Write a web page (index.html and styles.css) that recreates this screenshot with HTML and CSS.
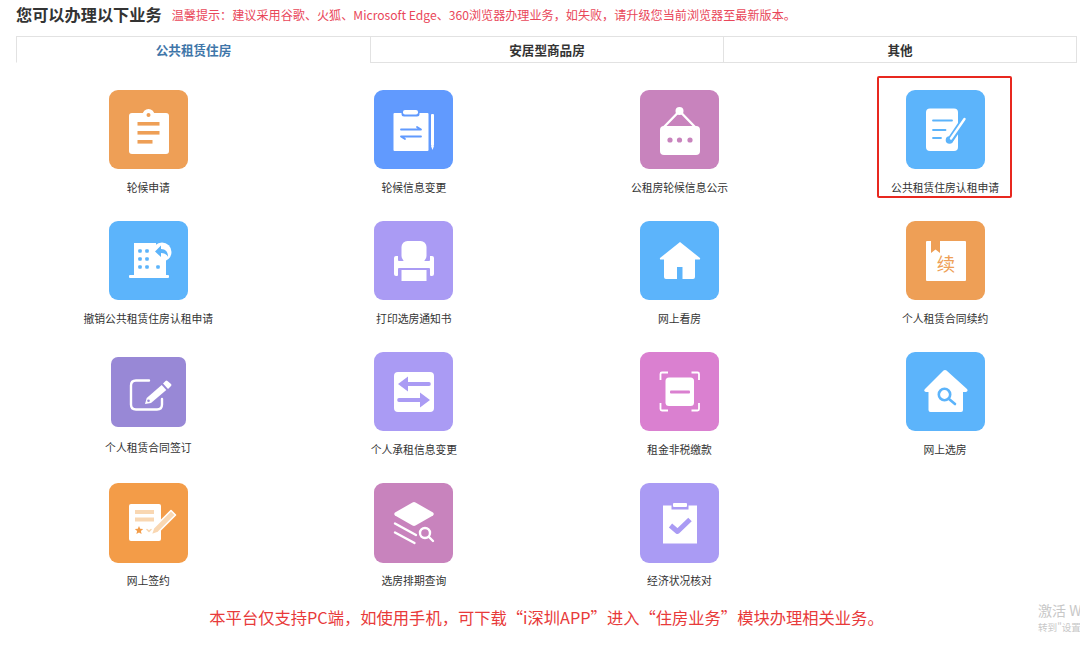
FILE: index.html
```html
<!DOCTYPE html>
<html lang="zh-CN">
  <head>
    <meta charset="UTF-8" />
    <meta name="viewport" content="width=device-width, initial-scale=1.0" />
    <title>您可以办理以下业务</title>
    <link rel="stylesheet" href="styles.css">
  </head>
  <body>
    <div class="head-row">
      <h1 class="page-title">您可以办理以下业务</h1>
      <span class="tip">温馨提示：建议采用谷歌、火狐、Microsoft Edge、360浏览器办理业务，如失败，请升级您当前浏览器至最新版本。</span>
    </div>

    <div class="tabs">
      <div class="tab active">公共租赁住房</div>
      <div class="tab">安居型商品房</div>
      <div class="tab">其他</div>
    </div>

    <div class="grid">
      <!-- row 1 -->
      <div class="tile">
        <div class="icon orange">
          <svg viewBox="0 0 79 79">
            <circle cx="39.5" cy="25" r="6" />
            <rect x="20" y="23" width="40" height="41" rx="3" />
            <circle class="cut" cx="39.5" cy="25" r="2" />
            <rect class="cut" x="28.5" y="32" width="22" height="3.6" />
            <rect class="cut" x="28.5" y="41" width="22" height="3.6" />
            <rect class="cut" x="28.5" y="50" width="15" height="3.6" />
          </svg>
        </div>
        <div class="label">轮候申请</div>
      </div>
      <div class="tile">
        <div class="icon blue">
          <svg viewBox="0 0 79 79">
            <rect x="19.5" y="23" width="35" height="38" rx="1" />
            <rect class="cut" x="27.5" y="19" width="18" height="7.5" rx="2.5" />
            <rect x="29" y="20" width="15" height="4.5" rx="2" />
            <rect x="57" y="24" width="3" height="32" rx="1" />
            <path d="M57 56h3l-1.5 4z" />
            <path class="cut-line" d="M27 39.5h20l-4-2.6M47 46.5H27l4 2.6" />
          </svg>
        </div>
        <div class="label">轮候信息变更</div>
      </div>
      <div class="tile">
        <div class="icon plum">
          <svg viewBox="0 0 79 79">
            <circle cx="39.5" cy="21" r="4" />
            <path class="line" d="M39.5 21 23 38M39.5 21 56 38" />
            <rect x="20" y="36" width="40" height="29" rx="4" />
            <path class="cut" d="M39.5 27.500 30.500 36h18z" />
            <circle class="cut" cx="30" cy="50" r="2.6" />
            <circle class="cut" cx="39.5" cy="50" r="2.6" />
            <circle class="cut" cx="50" cy="50" r="2.6" />
          </svg>
        </div>
        <div class="label">公租房轮候信息公示</div>
      </div>
      <div class="tile marked">
        <div class="icon sky">
          <svg viewBox="0 0 79 79">
            <rect x="20" y="18.500" width="32" height="42.500" rx="4" />
            <path class="cut-line" d="M27 30.500h19M27 40h12.500M27 48h8" />
            <path class="cut-line halo-line" d="M58.500 29 45 49" />
            <circle class="cut" cx="43.500" cy="50" r="3.800" />
            <path class="line" d="M58.500 29 45 48.500" />
          </svg>
        </div>
        <div class="label">公共租赁住房认租申请</div>
      </div>

      <!-- row 2 -->
      <div class="tile">
        <div class="icon sky">
          <svg viewBox="0 0 79 79">
            <path d="M25 22h22v32H25z" />
            <rect x="47" y="38" width="10" height="17" />
            <rect x="20" y="54" width="40" height="3" rx="1" />
            <circle cx="53" cy="31" r="9.500" />
            <path class="cut" d="M46 30.500l6-6v3.600c5 .2 7 3.200 7 7.600-1.600-2.400-3.600-3.600-7-3.600v4z" />
            <rect class="cut" x="29.200" y="28.200" width="3.600" height="3.600" rx="1" />
            <rect class="cut" x="36.200" y="28.200" width="3.600" height="3.600" rx="1" />
            <rect class="cut" x="29.200" y="36.200" width="3.600" height="3.600" rx="1" />
            <rect class="cut" x="36.200" y="36.200" width="3.600" height="3.600" rx="1" />
            <rect class="cut" x="29.200" y="44.200" width="3.600" height="3.600" rx="1" />
            <rect class="cut" x="36.200" y="44.200" width="3.600" height="3.600" rx="1" />
            <rect class="cut" x="47.200" y="44.200" width="3.600" height="3.600" rx="1" />
          </svg>
        </div>
        <div class="label">撤销公共租赁住房认租申请</div>
      </div>
      <div class="tile">
        <div class="icon violet">
          <svg viewBox="0 0 79 79">
            <rect x="27.500" y="20" width="25" height="21" rx="6" />
            <path d="M22 35h2v4q0 1 1 1h30q1 0 1-1v-4h2q2 0 2 2v16q0 2-2 2h-1q-1 0-1-1v-6q0-1-1-1H25q-1 0-1 1v6q0 1-1 1h-1q-2 0-2-2V37q0-2 2-2z" />
            <rect x="27.500" y="49" width="25" height="11" />
          </svg>
        </div>
        <div class="label">打印选房通知书</div>
      </div>
      <div class="tile">
        <div class="icon sky">
          <svg viewBox="0 0 79 79">
            <path d="M40 21 60 37q.5 1.500-1 1.500h-4V56q0 2-2 2H42.500V46h-5.500v12H26q-2 0-2-2V38.500h-3q-1.500 0-1-1.500z" />
          </svg>
        </div>
        <div class="label">网上看房</div>
      </div>
      <div class="tile">
        <div class="icon orange">
          <svg viewBox="0 0 79 79">
            <rect x="20" y="20" width="40" height="40" rx="1" />
            <path class="cut" d="M25 20h9v12l-4.500-3.500L25 32z" />
            <text class="icon-char" x="40" y="49.500">续</text>
          </svg>
        </div>
        <div class="label">个人租赁合同续约</div>
      </div>

      <!-- row 3 -->
      <div class="tile">
        <div class="icon small dusk">
          <svg viewBox="0 0 75 70">
            <path class="line" d="M38 23.500H25q-5 0-5 5v19q0 5 5 5h21q5 0 5-5V42" />
            <path d="M34 47l1.700-6 15-13 4.600 5L40 46z" />
            <path d="M52 26.500l2.500-2.500q1-1 2 0l3.500 3q1 1 0 2L57 32z" />
            <circle class="cut" cx="37.500" cy="43.800" r="1.300" />
          </svg>
        </div>
        <div class="label">个人租赁合同签订</div>
      </div>
      <div class="tile">
        <div class="icon violet">
          <svg viewBox="0 0 79 79">
            <rect x="20" y="20" width="40" height="40" rx="4" />
            <path class="cut" d="M24 32l10-7.500V30h21q1.800 0 1.800 2T55 34H34v5.500z" />
            <path class="cut" d="M56 48l-10 7.500V50H25q-1.800 0-1.800-2t1.800-2h21v-5.500z" />
          </svg>
        </div>
        <div class="label">个人承租信息变更</div>
      </div>
      <div class="tile">
        <div class="icon orchid">
          <svg viewBox="0 0 79 79">
            <path class="line thin" d="M20.500 28v-6q0-1.500 1.500-1.500h6M51.500 20.500h6q1.500 0 1.500 1.500v6M20.500 51v6q0 1.500 1.500 1.500h6M51.500 58.500h6q1.500 0 1.500-1.500v-6" />
            <rect x="25.500" y="25.500" width="28.500" height="28.500" rx="3.500" />
            <rect class="cut" x="30" y="38.500" width="20" height="3" rx="1" />
          </svg>
        </div>
        <div class="label">租金非税缴款</div>
      </div>
      <div class="tile">
        <div class="icon sky">
          <svg viewBox="0 0 79 79">
            <path d="M39 18q1 0 1.500.6L61 37q1.500 2-1 3h-3v18q0 2-2 2H24.500q-2 0-2-2V40H20q-3-1-1-3L37.500 18.600Q38 18 39 18z" />
            <circle class="cut-ring" cx="38.500" cy="42.500" r="5.700" />
            <path class="cut-line thick" d="M43 47l6 5" />
          </svg>
        </div>
        <div class="label">网上选房</div>
      </div>

      <!-- row 4 -->
      <div class="tile">
        <div class="icon tall amber">
          <svg viewBox="0 0 79 80">
            <rect x="20" y="21" width="32" height="37" rx="2" />
            <rect class="pale" x="26" y="27" width="19" height="4" />
            <rect class="pale" x="26" y="34.500" width="19" height="4" />
            <path class="cut" d="M30 43l1.200 2.800 3 .2-2.300 2 .7 3-2.600-1.600-2.600 1.600.7-3-2.300-2 3-.2z" />
            <path class="pale-line" d="M38 46.500l2 1.800 2-1.800" />
            <path class="pen" d="M62 27.500l4.500 4.500L49 49.500 42 52l2.500-7z" />
          </svg>
        </div>
        <div class="label">网上签约</div>
      </div>
      <div class="tile">
        <div class="icon tall plum">
          <svg viewBox="0 0 79 80">
            <path d="M38.500 19.500q1.500-.800 3 0L59 29.500q1.500 1.500 0 3L41.500 42.500q-1.500.800-3 0L21 32.500q-1.500-1.500 0-3z" />
            <path class="line" d="M21 40.500l21 11.500M21 49.500l19.500 10.500" />
            <circle class="ring" cx="51" cy="50" r="5" />
            <path class="line" d="M55 54l4 4" />
          </svg>
        </div>
        <div class="label">选房排期查询</div>
      </div>
      <div class="tile">
        <div class="icon tall violet">
          <svg viewBox="0 0 79 80">
            <rect x="23" y="22.500" width="34" height="38" />
            <rect class="cut" x="31.500" y="19" width="17" height="7.500" />
            <rect x="33" y="20" width="14" height="4" rx="1" />
            <path class="cut-line check" d="M30.500 42.500l7 6 12.500-12" />
          </svg>
        </div>
        <div class="label">经济状况核对</div>
      </div>
    </div>

    <div class="notice">本平台仅支持PC端，如使用手机，可下载“i深圳APP”进入“住房业务”模块办理相关业务。</div>

    <div class="watermark">
      <div class="watermark-main">激活 Windows</div>
      <div class="watermark-sub">转到"设置"以激活 Windows。</div>
    </div>
  </body>
</html>
```

FILE: styles.css
```css
* {
  margin: 0;
  padding: 0;
  box-sizing: border-box;
}

body {
  font-family: "Noto Sans CJK SC", "Noto Sans", sans-serif;
  background: #fff;
  height: 100vh;
  padding: 0 3px 0 16px;
  overflow: hidden;
  position: relative;
}

.head-row {
  height: 28px;
  display: flex;
  align-items: center;
  gap: 10px;
  margin-bottom: 8px;
}

.page-title {
  font-size: 16.2px;
  font-weight: 700;
  color: #333;
  white-space: nowrap;
}

.tip {
  font-size: 12.12px;
  color: #e9475a;
  white-space: nowrap;
}

/* Tabs */
.tabs {
  display: flex;
  height: 27px;
  border-top: 1px solid #e2e2e2;
  border-right: 1px solid #e2e2e2;
}

.tab {
  flex: 1;
  display: flex;
  justify-content: center;
  align-items: center;
  font-size: 12.6px;
  font-weight: 700;
  color: #333;
  border-bottom: 1px solid #e2e2e2;
  border-left: 1px solid #e2e2e2;
}

.tab.active {
  flex: 0 0 354px;
  color: #3f76a9;
  border-bottom-color: transparent;
}

/* Service tiles */
.grid {
  display: grid;
  grid-template-columns: repeat(4, 1fr);
  row-gap: 27px;
  margin: 27px -0.9px 0 -0.5px;
}

.tile {
  position: relative;
  display: flex;
  flex-direction: column;
  align-items: center;
}

.marked::after {
  content: "";
  box-sizing: border-box;
  position: absolute;
  top: -14px;
  left: 50%;
  width: 135px;
  height: 122px;
  margin-left: -68px;
  border: 2px solid #e8281f;
  border-radius: 2px;
}

.icon {
  width: 79px;
  height: 79px;
  border-radius: 9px;
  margin-bottom: 11px;
}

.icon svg {
  display: block;
  width: 100%;
  height: 100%;
  fill: #fff;
}

.icon.small {
  width: 75px;
  height: 70px;
  border-radius: 7px;
  margin: 5px 0 14px;
}

.icon.tall {
  height: 80px;
  margin-bottom: 10px;
}

.orange {
  background: #ee9f56;
  color: #ee9f56;
}

.blue {
  background: #619afe;
  color: #619afe;
}

.plum {
  background: #c883bd;
  color: #c883bd;
}

.sky {
  background: #5cb4fb;
  color: #5cb4fb;
}

.violet {
  background: #aa9bf4;
  color: #aa9bf4;
}

.dusk {
  background: #9888d6;
  color: #9888d6;
}

.orchid {
  background: #da80d0;
  color: #da80d0;
}

.amber {
  background: #f39c48;
  color: #f39c48;
}

/* Shapes inside the icons */
.icon .cut {
  fill: currentColor;
}

.icon .pale {
  fill: #f9d7b2;
}

.icon .line,
.icon .ring,
.icon .cut-line,
.icon .cut-ring,
.icon .pale-line {
  fill: none;
  stroke: #fff;
  stroke-width: 2.4;
  stroke-linecap: round;
  stroke-linejoin: round;
}

.icon .line.thin {
  stroke-width: 1.8;
  stroke-linecap: butt;
}

.icon .cut-line,
.icon .cut-ring {
  stroke: currentColor;
  stroke-width: 1.8;
}

.icon .cut-line.thick,
.icon .cut-ring {
  stroke-width: 2.6;
}

.icon .cut-line.halo-line {
  stroke-width: 6.4;
}

.icon .cut-line.check {
  stroke-width: 5;
  stroke-linecap: butt;
}

.icon .pale-line {
  stroke: #f9d7b2;
  stroke-width: 1.6;
}

.icon .pen {
  fill: #f9d7b2;
  stroke: #fff;
  stroke-width: 1.6;
  stroke-linejoin: round;
}

.icon-char {
  font-size: 18.5px;
  fill: currentColor;
  text-anchor: middle;
}

.label {
  font-size: 10.8px;
  line-height: 14px;
  color: #333;
  white-space: nowrap;
}

.icon.small + .label {
  margin-top: -1px;
}

.notice {
  margin-top: 18px;
  font-size: 16.3px;
  line-height: 24px;
  color: #e83a3a;
  text-align: center;
  white-space: nowrap;
}

/* Windows activation watermark */
.watermark {
  position: absolute;
  top: 601px;
  left: 1038px;
  white-space: nowrap;
  color: #c8c8c8;
}

.watermark-main {
  font-size: 14px;
  line-height: 18px;
}

.watermark-sub {
  font-size: 9.6px;
  line-height: 15px;
  margin-top: 1px;
}
```
